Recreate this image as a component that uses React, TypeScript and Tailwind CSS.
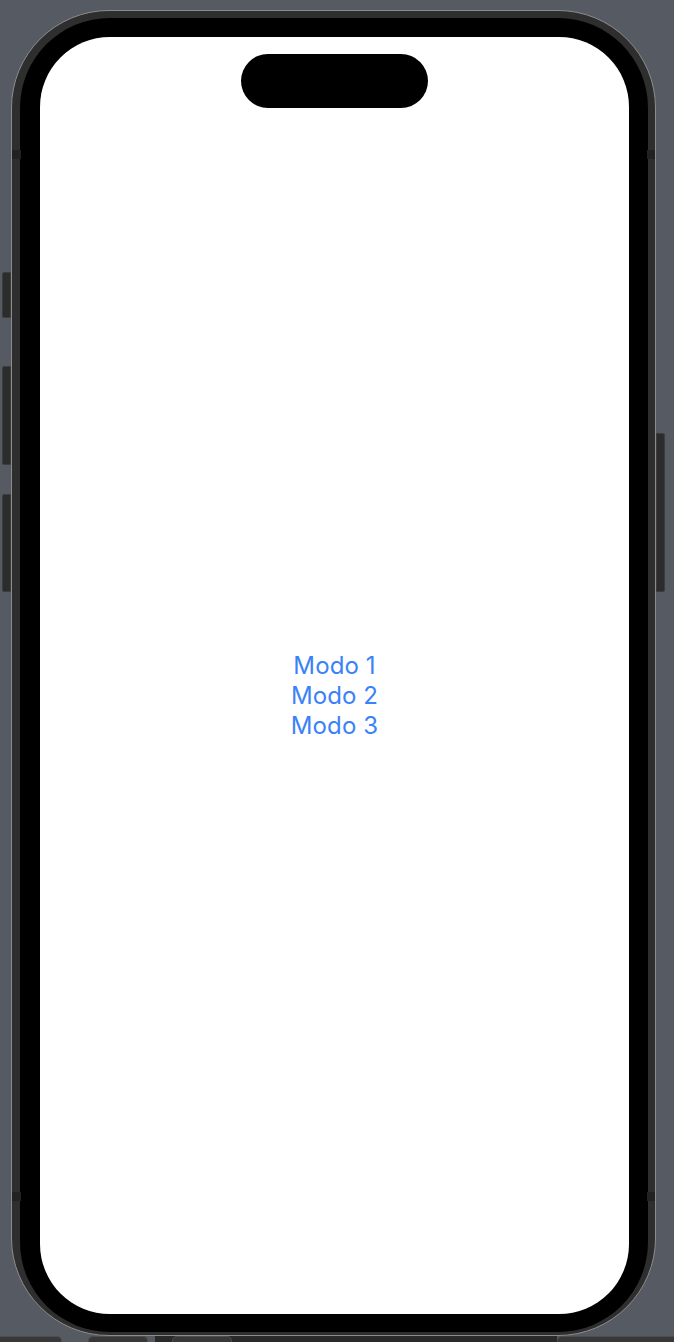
const MODES = ["Modo 1", "Modo 2", "Modo 3"];

const KEY = "w-[9px] border border-[#3d3d3d] bg-[#2c2c2c]";

function LeftButtons() {
  return (
    <div className="flex w-[11px] flex-col items-end pt-[272px]">
      <div className={`${KEY} h-[46px] rounded-l-[2px]`} />
      <div className={`${KEY} mt-[48px] h-[99px] rounded-l-[2px]`} />
      <div className={`${KEY} mt-[29px] h-[98px] rounded-l-[2px]`} />
    </div>
  );
}

function RightButton() {
  return (
    <div className="flex flex-col pt-[433px]">
      <div className={`${KEY} h-[159px] rounded-r-[2px]`} />
    </div>
  );
}

function Toolbar() {
  const tab = "h-[6px] rounded-t-[5px] border-x border-t border-[#4c4c4c] bg-[#383838]";
  return (
    <div className="flex h-[6px] items-end">
      <div className={`${tab} w-[62px] rounded-tl-none border-l-0`} />
      <div className="w-[26px]" />
      <div className={`${tab} w-[60px]`} />
      <div className="w-[7px]" />
      <div className="flex h-[6px] w-[402px] bg-[#2a2a2a] pl-[17px]">
        <div className={`${tab} w-[60px]`} />
      </div>
      <div className={`${tab} w-[117px] rounded-tr-none border-r-0`} />
    </div>
  );
}

function Phone() {
  return (
    <div className="pt-[10px]">
      <div className="relative h-[1326px] w-[645px] rounded-[98px] border border-[#8c8c8c] bg-[#2e2e2e] pb-[3px] pl-[8px] pr-[7px] pt-[7px]">
        {/* antenna bands on the frame */}
        <span className="absolute left-0 top-[139px] h-[9px] w-[9px] bg-[#222]" />
        <span className="absolute right-0 top-[139px] h-[9px] w-[8px] bg-[#222]" />
        <span className="absolute left-0 top-[1181px] h-[9px] w-[9px] bg-[#222]" />
        <span className="absolute right-0 top-[1181px] h-[9px] w-[8px] bg-[#222]" />
        <div className="h-full w-full rounded-[90px] bg-black pb-[18px] pl-[20px] pr-[19px] pt-[19px]">
          <div className="flex h-full w-full flex-col items-center rounded-[70px] bg-white">
            {/* dynamic island */}
            <div className="mt-[17px] h-[54px] w-[187px] rounded-full bg-black" />
            <div className="flex flex-1 flex-col items-center justify-center pb-[30px]">
              {MODES.map((m) => (
                <button
                  key={m}
                  className="text-[24px] leading-[30px] tracking-[0.1px] text-[#3a82f7]"
                >
                  {m}
                </button>
              ))}
            </div>
          </div>
        </div>
      </div>
    </div>
  );
}

export default function App() {
  return (
    <div className="flex h-[1342px] w-[674px] flex-col overflow-hidden bg-[#565b63] font-['Inter','Noto_Sans',sans-serif]">
      <div className="flex h-[1336px]">
        <LeftButtons />
        <Phone />
        <RightButton />
      </div>
      <Toolbar />
    </div>
  );
}
